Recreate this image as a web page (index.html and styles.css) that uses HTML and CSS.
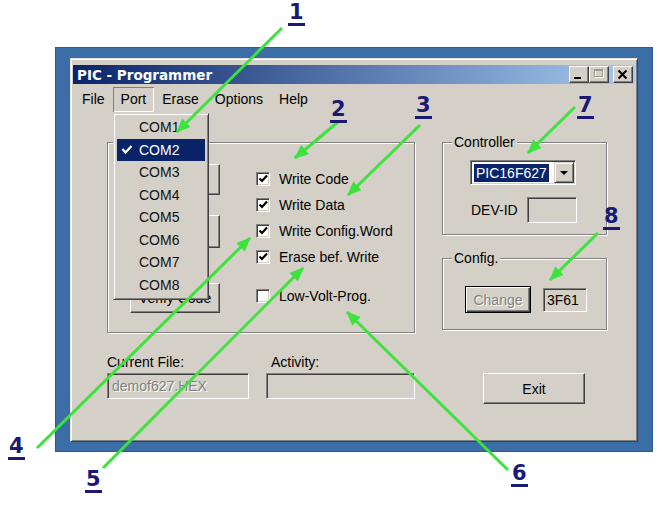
FILE: index.html
```html
<!DOCTYPE html>
<html lang="en">
<head>
  <meta charset="UTF-8">
  <title>PIC - Programmer</title>
  <link rel="stylesheet" href="styles.css">
</head>
<body>

  <div class="stage">
    <div class="desktop">
      <div class="window">

        <div class="titlebar">
          <span class="title">PIC - Programmer</span>
          <div class="caption">
            <span class="cbtn"><svg width="18" height="15"><rect x="4" y="10" width="7" height="2" fill="#000"/></svg></span>
            <span class="cbtn"><svg width="18" height="15"><rect x="5.5" y="3.5" width="8" height="7" fill="none" stroke="#fff"/><rect x="4.5" y="2.5" width="8" height="7" fill="none" stroke="#9a9890"/><line x1="4.5" y1="3.5" x2="12.5" y2="3.5" stroke="#9a9890"/></svg></span>
            <span class="cbtn close"><svg width="18" height="15"><path d="M4.5 3.5L12.5 11.5M12.5 3.5L4.5 11.5" stroke="#000" stroke-width="2"/></svg></span>
          </div>
        </div>

        <div class="menubar">
          <span class="menu">File</span>
          <span class="menu open">Port</span>
          <span class="menu">Erase</span>
          <span class="menu">Options</span>
          <span class="menu">Help</span>
        </div>

        <div class="client">
          <div class="top-row">
            <div class="group main-group">
              <div class="actions">
                <!-- first two buttons are hidden behind the open Port menu -->
                <button class="btn b1"></button>
                <button class="btn b2"></button>
                <button class="btn b3">Verify Code</button>
              </div>
              <div class="options">
                <label class="check"><span class="box"><svg width="12" height="12"><polyline points="2.5,5.5 5,8 10,2.5" fill="none" stroke="#000" stroke-width="2.2"/></svg></span>Write Code</label>
                <label class="check"><span class="box"><svg width="12" height="12"><polyline points="2.5,5.5 5,8 10,2.5" fill="none" stroke="#000" stroke-width="2.2"/></svg></span>Write Data</label>
                <label class="check"><span class="box"><svg width="12" height="12"><polyline points="2.5,5.5 5,8 10,2.5" fill="none" stroke="#000" stroke-width="2.2"/></svg></span>Write Config.Word</label>
                <label class="check"><span class="box"><svg width="12" height="12"><polyline points="2.5,5.5 5,8 10,2.5" fill="none" stroke="#000" stroke-width="2.2"/></svg></span>Erase bef. Write</label>
                <label class="check gap"><span class="box"></span>Low-Volt-Prog.</label>
              </div>
            </div>

            <div class="side">
              <div class="group controller">
                <div class="legend">Controller</div>
                <div class="combo">
                  <span class="combo-val">PIC16F627</span>
                  <span class="combo-btn"><svg width="8" height="4"><polygon points="0,0 8,0 4,4" fill="#000"/></svg></span>
                </div>
                <div class="devid">
                  <span>DEV-ID</span>
                  <span class="field dev-field"></span>
                </div>
              </div>

              <div class="group config">
                <div class="legend">Config.</div>
                <div class="config-row">
                  <button class="btn default" disabled>Change</button>
                  <span class="field cfg-field">3F61</span>
                </div>
              </div>
            </div>
          </div>

          <div class="bottom-row">
            <div class="file-col">
              <div class="lbl">Current File:</div>
              <div class="field grey">demof627.HEX</div>
            </div>
            <div class="act-col">
              <div class="lbl">Activity:</div>
              <div class="field"></div>
            </div>
            <button class="btn exit">Exit</button>
          </div>
        </div>

        <div class="port-menu">
          <div class="item"><span class="mark"></span>COM1</div>
          <div class="item sel"><span class="mark"><svg width="22" height="12"><polyline points="5.5,5 8.5,8.5 14.5,2" fill="none" stroke="#fff" stroke-width="2.2"/></svg></span>COM2</div>
          <div class="item"><span class="mark"></span>COM3</div>
          <div class="item"><span class="mark"></span>COM4</div>
          <div class="item"><span class="mark"></span>COM5</div>
          <div class="item"><span class="mark"></span>COM6</div>
          <div class="item"><span class="mark"></span>COM7</div>
          <div class="item"><span class="mark"></span>COM8</div>
        </div>

      </div>
    </div>

    <svg class="arrows" width="663" height="505" viewBox="0 0 663 505">
      <defs>
        <marker id="head" viewBox="0 0 12 10" refX="11" refY="5" markerWidth="5" markerHeight="4" orient="auto">
          <path d="M0 0L12 5L0 10z" fill="#3de23d"/>
        </marker>
      </defs>
      <g stroke="#3de23d" stroke-width="3" marker-end="url(#head)">
        <line x1="282" y1="28" x2="177" y2="132"/>
        <line x1="338" y1="122" x2="295" y2="158"/>
        <line x1="420" y1="125" x2="348" y2="195"/>
        <line x1="575" y1="107" x2="528" y2="153"/>
        <line x1="598" y1="233" x2="550" y2="280"/>
        <line x1="37" y1="448" x2="250" y2="238"/>
        <line x1="103" y1="468" x2="303" y2="268"/>
        <line x1="508" y1="470" x2="347" y2="312"/>
      </g>
    </svg>

    <span class="num n1">1</span>
    <span class="num n2">2</span>
    <span class="num n3">3</span>
    <span class="num n4">4</span>
    <span class="num n5">5</span>
    <span class="num n6">6</span>
    <span class="num n7">7</span>
    <span class="num n8">8</span>
  </div>

</body>
</html>
```

FILE: styles.css
```css
body {
  margin: 0;
  background: #fff;
  font-family: "Liberation Sans", Arial, sans-serif;
  font-size: 14px;
  color: #000;
}

.stage {
  position: relative;
  width: 663px;
  height: 505px;
  padding: 47px 0 0 55px;
  box-sizing: border-box;
  overflow: hidden;
}

.desktop {
  width: 598px;
  height: 405px;
  box-sizing: border-box;
  padding: 10px 14px 0;
  background: #3b6ea7;
  border: 1px solid #2d5a8c;
}

.window {
  position: relative;
  width: 568px;
  height: 384px;
  box-sizing: border-box;
  padding: 6px 2px 0;
  background: #d4d0c8;
  border: 1px solid;
  border-color: #e4e2dc #404040 #404040 #e4e2dc;
  box-shadow: inset 1px 1px #fff, inset -1px -1px #808080;
}

/* title bar */
.titlebar {
  display: flex;
  align-items: center;
  justify-content: space-between;
  height: 19px;
  padding: 0 2px 0 4px;
  background: linear-gradient(90deg, #0a246a, #a6caf0);
}

.title {
  color: #fff;
  font: bold 13.5px "DejaVu Sans", sans-serif;
}

.caption {
  display: flex;
}

.cbtn {
  display: flex;
  width: 20px;
  height: 17px;
  box-sizing: border-box;
  background: #d4d0c8;
  border: 1px solid;
  border-color: #fff #404040 #404040 #fff;
  box-shadow: inset -1px -1px #808080;
}

.cbtn.close {
  margin-left: 4px;
}

/* menu */
.menubar {
  display: flex;
  height: 25px;
  margin-top: 3px;
  padding-left: 1px;
}

.menu {
  padding: 0 8px;
  line-height: 25px;
}

.menu.open {
  box-shadow: inset 1px 1px #808080, inset -1px -1px #fff;
}

.port-menu {
  position: absolute;
  left: 42px;
  top: 54px;
  width: 96px;
  box-sizing: border-box;
  padding: 2px 3px 3px;
  background: #d4d0c8;
  border: 1px solid;
  border-color: #d4d0c8 #404040 #404040 #d4d0c8;
  box-shadow: inset 1px 1px #fff, inset -1px -1px #808080;
}

.item {
  display: flex;
  align-items: center;
  height: 22.5px;
  color: #111;
}

.item.sel {
  background: #0a246a;
  color: #fff;
}

.mark {
  display: flex;
  width: 22px;
}

/* client area */
.client {
  padding: 30px 0 0 34px;
}

.top-row {
  display: flex;
  align-items: flex-start;
}

.group {
  box-sizing: border-box;
  border: 1px solid #808080;
  box-shadow: inset 1px 1px #fff, 1px 1px #fff;
}

.legend {
  width: fit-content;
  margin: -9px 0 0 9px;
  padding: 0 2px;
  line-height: 16px;
  background: #d4d0c8;
}

.main-group {
  display: flex;
  width: 308px;
  height: 191px;
  padding: 21px 0 0 22px;
}

.actions {
  display: flex;
  flex-direction: column;
  width: 90px;
}

.btn {
  box-sizing: border-box;
  padding: 0;
  font: 14px "Liberation Sans", Arial, sans-serif;
  color: #000;
  background: #d4d0c8;
  border: 1px solid;
  border-color: #fff #404040 #404040 #fff;
  box-shadow: inset -1px -1px #808080;
}

.b1 {
  height: 31px;
}

.b2 {
  height: 33px;
  margin-top: 20px;
}

.b3 {
  height: 30px;
  margin-top: 35px;
}

.options {
  margin-left: 36px;
  padding-top: 2px;
}

.check {
  display: flex;
  align-items: center;
  height: 26px;
}

.check.gap {
  margin-top: 13px;
}

.box {
  display: flex;
  width: 14px;
  height: 14px;
  box-sizing: border-box;
  margin-right: 9px;
  background: #fff;
  border: 1px solid;
  border-color: #808080 #fff #fff #808080;
  box-shadow: inset 1px 1px #404040, inset -1px -1px #d4d0c8;
}

.side {
  display: flex;
  flex-direction: column;
  margin-left: 27px;
}

.controller {
  width: 165px;
  height: 93px;
}

.combo {
  display: flex;
  align-items: center;
  width: 106px;
  height: 25px;
  box-sizing: border-box;
  margin: 10px 0 0 27px;
  padding: 0 1px 0 3px;
  background: #fff;
  border: 1px solid;
  border-color: #808080 #fff #fff #808080;
  box-shadow: inset 1px 1px #404040, inset -1px -1px #d4d0c8;
}

.combo-val {
  padding: 0 2px;
  line-height: 18px;
  color: #fff;
  background: #0a246a;
}

.combo-btn {
  display: flex;
  align-items: center;
  justify-content: center;
  width: 20px;
  height: 21px;
  box-sizing: border-box;
  margin-left: auto;
  background: #d4d0c8;
  border: 1px solid;
  border-color: #d4d0c8 #404040 #404040 #d4d0c8;
  box-shadow: inset 1px 1px #fff, inset -1px -1px #808080;
}

.devid {
  display: flex;
  align-items: center;
  gap: 9px;
  margin: 12px 0 0 28px;
}

.field {
  height: 26px;
  box-sizing: border-box;
  padding: 0 4px;
  line-height: 24px;
  background: #d4d0c8;
  border: 1px solid;
  border-color: #808080 #fff #fff #808080;
  box-shadow: inset 1px 1px #404040, inset -1px -1px #d4d0c8;
}

.dev-field {
  width: 50px;
}

.config {
  width: 165px;
  height: 72px;
  margin-top: 23px;
}

.config-row {
  display: flex;
  align-items: center;
  margin: 20px 0 0 22px;
}

.btn.default {
  width: 66px;
  height: 27px;
  color: #808080;
  text-shadow: 1px 1px #fff;
  border: 1px solid #000;
  box-shadow: inset 1px 1px #fff, inset -1px -1px #404040, inset -2px -2px #808080;
}

.cfg-field {
  width: 44px;
  height: 24px;
  margin-left: 12px;
  padding: 0 3px;
  line-height: 22px;
}

.bottom-row {
  display: flex;
  align-items: flex-start;
  margin-top: 21px;
}

.lbl {
  height: 19px;
  line-height: 16px;
}

.file-col {
  width: 142px;
}

.field.grey {
  color: #808080;
  text-shadow: 1px 1px #fff;
}

.act-col {
  width: 149px;
  margin-left: 17px;
}

.act-col .lbl {
  padding-left: 5px;
}

.exit {
  width: 102px;
  height: 31px;
  margin: 19px 0 0 68px;
}

/* annotations */
.arrows {
  position: absolute;
  left: 0;
  top: 0;
  pointer-events: none;
}

.num {
  position: absolute;
  padding: 0 1px;
  font: bold 21px/21px "DejaVu Sans", sans-serif;
  color: #1a1a70;
  border-bottom: 3px solid #1a1a70;
}

.n1 { left: 288px; top: 2px; }
.n2 { left: 330px; top: 99px; }
.n3 { left: 415px; top: 95px; }
.n4 { left: 8px; top: 436px; }
.n5 { left: 85px; top: 469px; }
.n6 { left: 511px; top: 463px; }
.n7 { left: 577px; top: 95px; }
.n8 { left: 603px; top: 206px; }
```
